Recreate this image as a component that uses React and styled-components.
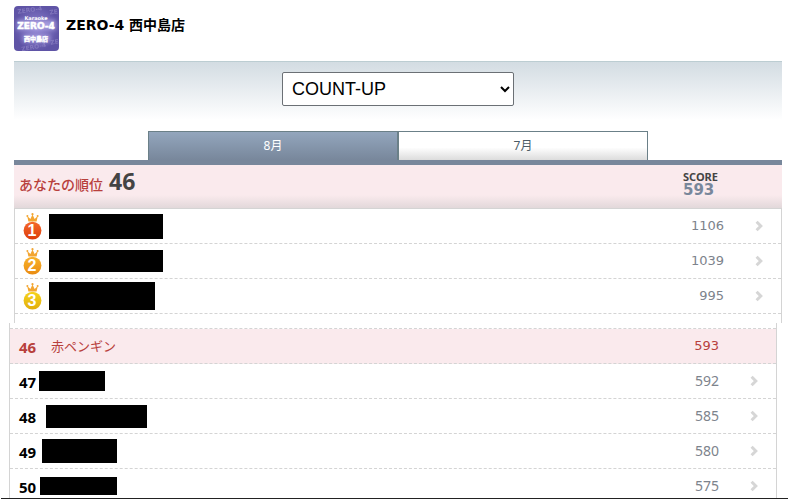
import React from 'react';
import styled, { createGlobalStyle, ThemeProvider } from 'styled-components';

const theme = {
  colors: {
    slate: '#78879b',
    tabBorder: '#6b8088',
    pink: '#faeaed',
    red: '#b8403c',
    gray: '#7d838c',
    line: '#d4d4d4',
    dark: '#444444',
  },
  fonts: {
    wide: '"DejaVu Sans", "Noto Sans CJK JP", sans-serif',
    body: '"Noto Sans", "Noto Sans CJK JP", sans-serif',
  },
};

const GlobalStyle = createGlobalStyle`
  * {
    box-sizing: border-box;
  }

  body {
    margin: 0;
    background: #ffffff;
  }

  ol {
    margin: 0;
    padding: 0;
    list-style: none;
  }
`;

const Page = styled.div`
  display: flex;
  flex-direction: column;
  height: 100vh;
  overflow: hidden;
  font-family: ${({ theme }) => theme.fonts.body};
`;

const Main = styled.main`
  flex: none;
  margin: 0 11px 0 14px;
`;

const Header = styled.header`
  display: flex;
  gap: 7px;
  height: 61px;
  padding-top: 6px;
`;

const ShopName = styled.h1`
  margin: 0;
  font-family: ${({ theme }) => theme.fonts.wide};
  font-size: 14px;
  font-weight: bold;
  line-height: 38px;
  color: #000000;
`;

const Filter = styled.div`
  display: flex;
  justify-content: center;
  height: 70px;
  padding-top: 10px;
  border-top: 1px solid #bccdd2;
  background: linear-gradient(#d3dce2, #ffffff 58px);
`;

const GameSelect = styled.select`
  width: 232px;
  height: 34px;
  padding: 0 5px;
  border: 1px solid #6b7075;
  border-radius: 2px;
  background-color: #ffffff;
  font-family: "Liberation Sans", sans-serif;
  font-size: 18px;
  color: #000000;
`;

const Tabs = styled.div`
  display: flex;
  justify-content: center;
  border-bottom: 5px solid ${({ theme }) => theme.colors.slate};
`;

const Tab = styled.button`
  flex: 0 1 250px;
  height: 29px;
  padding: 0 0 2px;
  border: 1px solid ${({ theme }) => theme.colors.tabBorder};
  border-bottom: 0;
  background: ${({ $active }) =>
    $active
      ? 'linear-gradient(#93a6bd, #78879b)'
      : 'linear-gradient(#ffffff 55%, #dcdcdc)'};
  color: ${({ $active }) => ($active ? '#ffffff' : '#4c5c66')};
  font-family: ${({ theme }) => theme.fonts.body};
  font-size: 12px;
`;

const Summary = styled.section`
  display: flex;
  justify-content: space-between;
  height: 44px;
  padding: 0 63px 0 5px;
  border-bottom: 1px solid ${({ theme }) => theme.colors.line};
  background: linear-gradient(#faeaed 70%, #e2d8da);
`;

const MyRank = styled.p`
  margin: 0;
  font-size: 14px;
  font-weight: 500;
  line-height: 32px;
  color: ${({ theme }) => theme.colors.red};

  strong {
    margin-left: 6px;
    font-size: 23px;
    color: ${({ theme }) => theme.colors.dark};
  }
`;

const MyScore = styled.dl`
  width: 36px;
  margin: 0;
  padding-top: 6px;
  font-weight: bold;

  dt {
    font-size: 11px;
    line-height: 12px;
    color: ${({ theme }) => theme.colors.dark};
  }

  dd {
    margin: 0;
    font-family: ${({ theme }) => theme.fonts.wide};
    font-size: 15px;
    line-height: 14px;
    color: ${({ theme }) => theme.colors.slate};
  }
`;

const TopList = styled.ol`
  padding-bottom: 9px;
  border: solid ${({ theme }) => theme.colors.line};
  border-width: 0 1px;
`;

const NearList = styled.ol`
  flex: 1 1 0;
  min-height: 0;
  margin: 0 16px 0 9px;
  padding-top: 5px;
  border: solid ${({ theme }) => theme.colors.line};
  border-width: 0 1px;
  overflow: hidden;

  li:first-child {
    border-top: 1px dashed ${({ theme }) => theme.colors.line};
  }
`;

const Row = styled.a`
  display: flex;
  align-items: center;
  height: 35px;
  padding: 0 18px 0 ${({ $medal }) => ($medal ? '7px' : '9px')};
  border-bottom: 1px dashed ${({ theme }) => theme.colors.line};
  background: ${({ $mine, theme }) => ($mine ? theme.colors.pink : 'none')};
  color: ${({ $mine, theme }) => ($mine ? theme.colors.red : theme.colors.gray)};
  text-decoration: none;
`;

const Rank = styled.span`
  width: 20px;
  padding-top: 2px;
  font-family: ${({ theme }) => theme.fonts.body};
  font-size: 15px;
  font-weight: bold;
  line-height: 18px;
  color: ${({ $mine, theme }) => ($mine ? theme.colors.red : '#000000')};
`;

const Name = styled.span`
  margin-left: 12px;
  font-size: 13px;
  line-height: 20px;
`;

const Mask = styled.span`
  width: ${({ $width }) => $width}px;
  height: ${({ $height }) => $height}px;
  margin-left: ${({ $gap }) => $gap}px;
  background: #000000;
`;

const Score = styled.span`
  margin-left: auto;
  font-family: ${({ $wide, theme }) => ($wide ? theme.fonts.wide : theme.fonts.body)};
  font-size: ${({ $wide }) => ($wide ? '13px' : '14px')};
  line-height: 20px;
`;

const Arrow = styled.span`
  display: flex;
  justify-content: flex-end;
  width: 39px;
`;

const Footer = styled.footer`
  flex: none;
  margin: 0 5px 0 1px;
  border-top: 1px solid #222222;
`;

const topPlayers = [
  { rank: 1, score: 1106, gap: 7, width: 114, height: 25 },
  { rank: 2, score: 1039, gap: 7, width: 114, height: 22 },
  { rank: 3, score: 995, gap: 7, width: 106, height: 28 },
];

const nearPlayers = [
  { rank: 46, score: 593, name: '赤ペンギン', mine: true },
  { rank: 47, score: 592, gap: 0, width: 66, height: 20 },
  { rank: 48, score: 585, gap: 7, width: 101, height: 23 },
  { rank: 49, score: 580, gap: 3, width: 75, height: 24 },
  { rank: 50, score: 575, gap: 1, width: 77, height: 18 },
];

const medalColors = {
  1: ['#f4692c', '#dc3d0c'],
  2: ['#f8b32c', '#ea8c12'],
  3: ['#f5d31c', '#e2ae0c'],
};

const ShopLogo = () => (
  <svg width="45" height="45" viewBox="0 0 45 45" role="img" aria-label="ZERO-4">
    <defs>
      <radialGradient id="logoBg">
        <stop offset="0" stopColor="#8f84d2" />
        <stop offset="1" stopColor="#5f54a6" />
      </radialGradient>
      <clipPath id="logoClip">
        <rect width="45" height="45" rx="4" />
      </clipPath>
      <filter id="logoGlow" x="-20%" y="-40%" width="140%" height="180%">
        <feGaussianBlur stdDeviation="2" />
      </filter>
    </defs>
    <g clipPath="url(#logoClip)" fontFamily="DejaVu Sans, Noto Sans CJK JP, sans-serif" fontWeight="bold" textAnchor="middle">
      <rect width="45" height="45" fill="url(#logoBg)" />
      <g fill="#8f84c6" fontSize="6" opacity="0.7">
        <text x="16" y="6" transform="rotate(-8 16 6)">ZERO-4</text>
        <text x="40" y="8" transform="rotate(-8 40 8)">ZE</text>
        <text x="20" y="43" transform="rotate(-10 20 43)">ZERO-4</text>
        <text x="41" y="38" transform="rotate(-10 41 38)">ZE</text>
      </g>
      <g fill="#c4bcf2" filter="url(#logoGlow)" opacity="0.6">
        <rect x="3" y="14" width="39" height="10" />
        <rect x="9" y="29" width="27" height="7" />
      </g>
      <g fill="#ffffff">
        <text x="22" y="14" fontSize="5">Karaoke</text>
        <text x="22" y="23" fontSize="9" stroke="#ffffff" strokeWidth="0.5">ZERO-4</text>
        <text x="22" y="35" fontSize="6" stroke="#ffffff" strokeWidth="0.4">西中島店</text>
      </g>
    </g>
  </svg>
);

const Medal = ({ rank }) => {
  const [light, deep] = medalColors[rank];
  return (
    <svg width="20" height="27" viewBox="0 0 20 27" role="img" aria-label={`${rank}位`}>
      <defs>
        <linearGradient id={`medal${rank}`} x1="0" y1="0" x2="0" y2="1">
          <stop offset="0" stopColor={light} />
          <stop offset="1" stopColor={deep} />
        </linearGradient>
      </defs>
      <path d="M6.4 8.6 L5.2 3 L8.4 6 L10.5 1.6 L12.6 6 L15.8 3 L14.6 8.6 Z" fill="#f3a530" />
      <g fill="#f3a530">
        <circle cx="5.4" cy="2.9" r="1" />
        <circle cx="10.5" cy="1.2" r="1.1" />
        <circle cx="15.6" cy="2.9" r="1" />
      </g>
      <circle cx="10.5" cy="17.6" r="8.9" fill={`url(#medal${rank})`} />
      <text
        x="10"
        y="23.4"
        textAnchor="middle"
        fontFamily="Liberation Sans, sans-serif"
        fontSize="16"
        fontWeight="bold"
        fill="#ffffff"
      >
        {rank}
      </text>
    </svg>
  );
};

const Chevron = () => (
  <svg width="8" height="12" viewBox="0 0 8 12" aria-hidden="true">
    <path d="M1.6 1.8 L5.8 6 L1.6 10.2" fill="none" stroke="#d6d6d6" strokeWidth="3" />
  </svg>
);

const PlayerRow = ({ player, medal }) => (
  <li>
    <Row href={`#rank-${player.rank}`} $medal={medal} $mine={player.mine}>
      {medal ? <Medal rank={player.rank} /> : <Rank $mine={player.mine}>{player.rank}</Rank>}
      {player.name ? (
        <Name>{player.name}</Name>
      ) : (
        <Mask $gap={player.gap} $width={player.width} $height={player.height} />
      )}
      <Score $wide={medal || player.mine}>{player.score}</Score>
      <Arrow>{!player.mine && <Chevron />}</Arrow>
    </Row>
  </li>
);

const App = () => {
  return (
    <ThemeProvider theme={theme}>
      <GlobalStyle />
      <Page>
        <Main>
          <Header>
            <ShopLogo />
            <ShopName>ZERO-4 西中島店</ShopName>
          </Header>
          <Filter>
            <GameSelect aria-label="ゲーム" defaultValue="COUNT-UP">
              <option>COUNT-UP</option>
            </GameSelect>
          </Filter>
          <Tabs>
            <Tab type="button" $active>8月</Tab>
            <Tab type="button">7月</Tab>
          </Tabs>
          <Summary>
            <MyRank>
              あなたの順位<strong>46</strong>
            </MyRank>
            <MyScore>
              <dt>SCORE</dt>
              <dd>593</dd>
            </MyScore>
          </Summary>
          <TopList>
            {topPlayers.map((player) => (
              <PlayerRow key={player.rank} player={player} medal />
            ))}
          </TopList>
        </Main>
        <NearList>
          {nearPlayers.map((player) => (
            <PlayerRow key={player.rank} player={player} />
          ))}
        </NearList>
        <Footer />
      </Page>
    </ThemeProvider>
  );
};

export default App;
